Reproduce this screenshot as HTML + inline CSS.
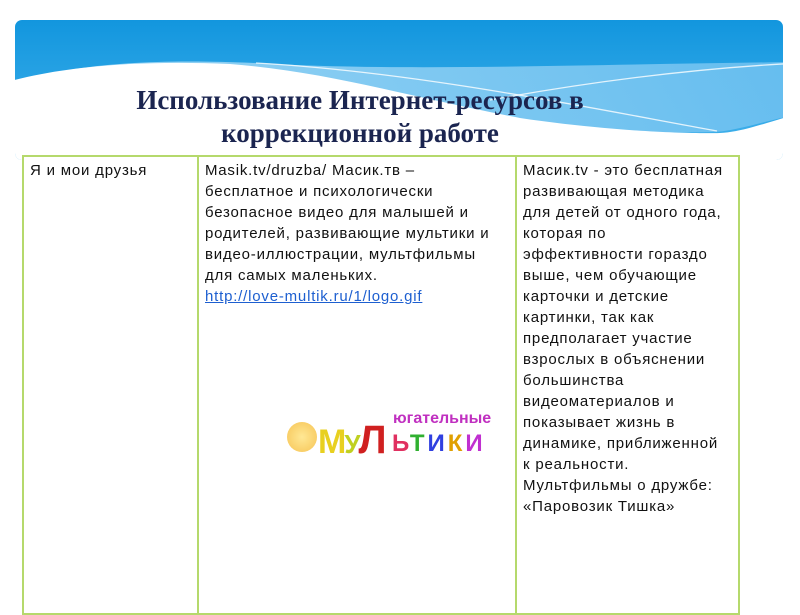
<!DOCTYPE html>
<html><head><meta charset="utf-8"><style>
body{margin:0;width:800px;height:600px;background:#fff;position:relative;overflow:hidden;font-family:"Liberation Sans",sans-serif}
.t{position:absolute;left:0;width:720px;text-align:center;font-family:"Liberation Serif",serif;font-weight:bold;font-size:27px;line-height:27px;color:#1b2550}
.tab{position:absolute;left:22px;top:155px;width:718px;height:460px;border:2px solid #b5d96c;box-sizing:border-box}
.v{position:absolute;top:0;bottom:0;width:2px;background:#b5d96c}
.c{position:absolute;font-size:15px;line-height:21px;color:#111;white-space:nowrap;letter-spacing:0.8px}
a{color:#1d5fd0;text-decoration:underline}
</style></head><body>
<svg style="position:absolute;left:0;top:0" width="800" height="160">
<defs>
<linearGradient id="g" x1="0" y1="0" x2="0" y2="1"><stop offset="0" stop-color="#0b92dc"/><stop offset="1" stop-color="#45b3ec"/></linearGradient>
<linearGradient id="g2" x1="0" y1="0" x2="1" y2="0"><stop offset="0" stop-color="#a8dbf6"/><stop offset="1" stop-color="#6cc0f0"/></linearGradient>
<clipPath id="cp"><rect x="15" y="20" width="768" height="140" rx="7"/></clipPath>
</defs>
<g clip-path="url(#cp)">
<rect x="0" y="0" width="800" height="160" fill="url(#g)"/>
<path d="M0 88 C60 65 140 58 256 63 C400 72 600 64 800 62 L800 114 C760 122 740 130 715 132 C600 134 500 130 300 110 L0 110Z" fill="url(#g2)" opacity="0.9"/>
<path d="M490 100 C600 80 700 68 800 63" stroke="#fff" stroke-width="1.3" fill="none" opacity="0.8"/>
<path d="M256 63 C420 72 600 110 717 131" stroke="#fff" stroke-width="1.3" fill="none" opacity="0.8"/>
<path d="M0 84 C60 66 140 60 230 64 C330 72 400 95 520 118 C600 130 680 134 720 133 C740 132 760 125 800 113 L800 160 L0 160Z" fill="#fff"/>
</g>
</svg>
<div class="t" style="top:87px">Использование Интернет-ресурсов в</div>
<div class="t" style="top:120px">коррекционной работе</div>
<div class="tab">
<div class="v" style="left:173px"></div>
<div class="v" style="left:491px"></div>
</div>
<div class="c" style="left:30px;top:160px">Я и мои друзья</div>
<div class="c" style="left:205px;top:160px">Masik.tv/druzba/ Масик.тв –<br>бесплатное и психологически<br>безопасное видео для малышей и<br>родителей, развивающие мультики и<br>видео-иллюстрации, мультфильмы<br>для самых маленьких.<br><a>http://love-multik.ru/1/logo.gif</a></div>
<div class="c" style="left:523px;top:160px">Масик.tv - это бесплатная<br>развивающая методика<br>для детей от одного года,<br>которая по<br>эффективности гораздо<br>выше, чем обучающие<br>карточки и детские<br>картинки, так как<br>предполагает участие<br>взрослых в объяснении<br>большинства<br>видеоматериалов и<br>показывает жизнь в<br>динамике, приближенной<br>к реальности.<br>Мультфильмы о дружбе:<br>«Паровозик Тишка»</div>
<div style="position:absolute;left:287px;top:422px;width:30px;height:30px;border-radius:50%;background:radial-gradient(#ffe27a,#f4b52a);opacity:.8"></div>
<div style="position:absolute;left:318px;top:418px;font:bold 34px 'Liberation Sans',sans-serif;letter-spacing:-2px;white-space:nowrap"><span style="color:#e8d020">М</span><span style="color:#c0d020;font-size:26px">У</span><span style="color:#d02020;font-size:40px">Л</span></div>
<div style="position:absolute;left:393px;top:410px;font:bold 16px 'Liberation Sans',sans-serif;color:#c030c0;white-space:nowrap">югательные</div>
<div style="position:absolute;left:392px;top:430px;font:bold 24px 'Liberation Sans',sans-serif;white-space:nowrap;letter-spacing:3px"><span style="color:#e03060">Ь</span><span style="color:#30b030">Т</span><span style="color:#3040e0">И</span><span style="color:#e0a000">К</span><span style="color:#c030d0">И</span></div>
</body></html>
